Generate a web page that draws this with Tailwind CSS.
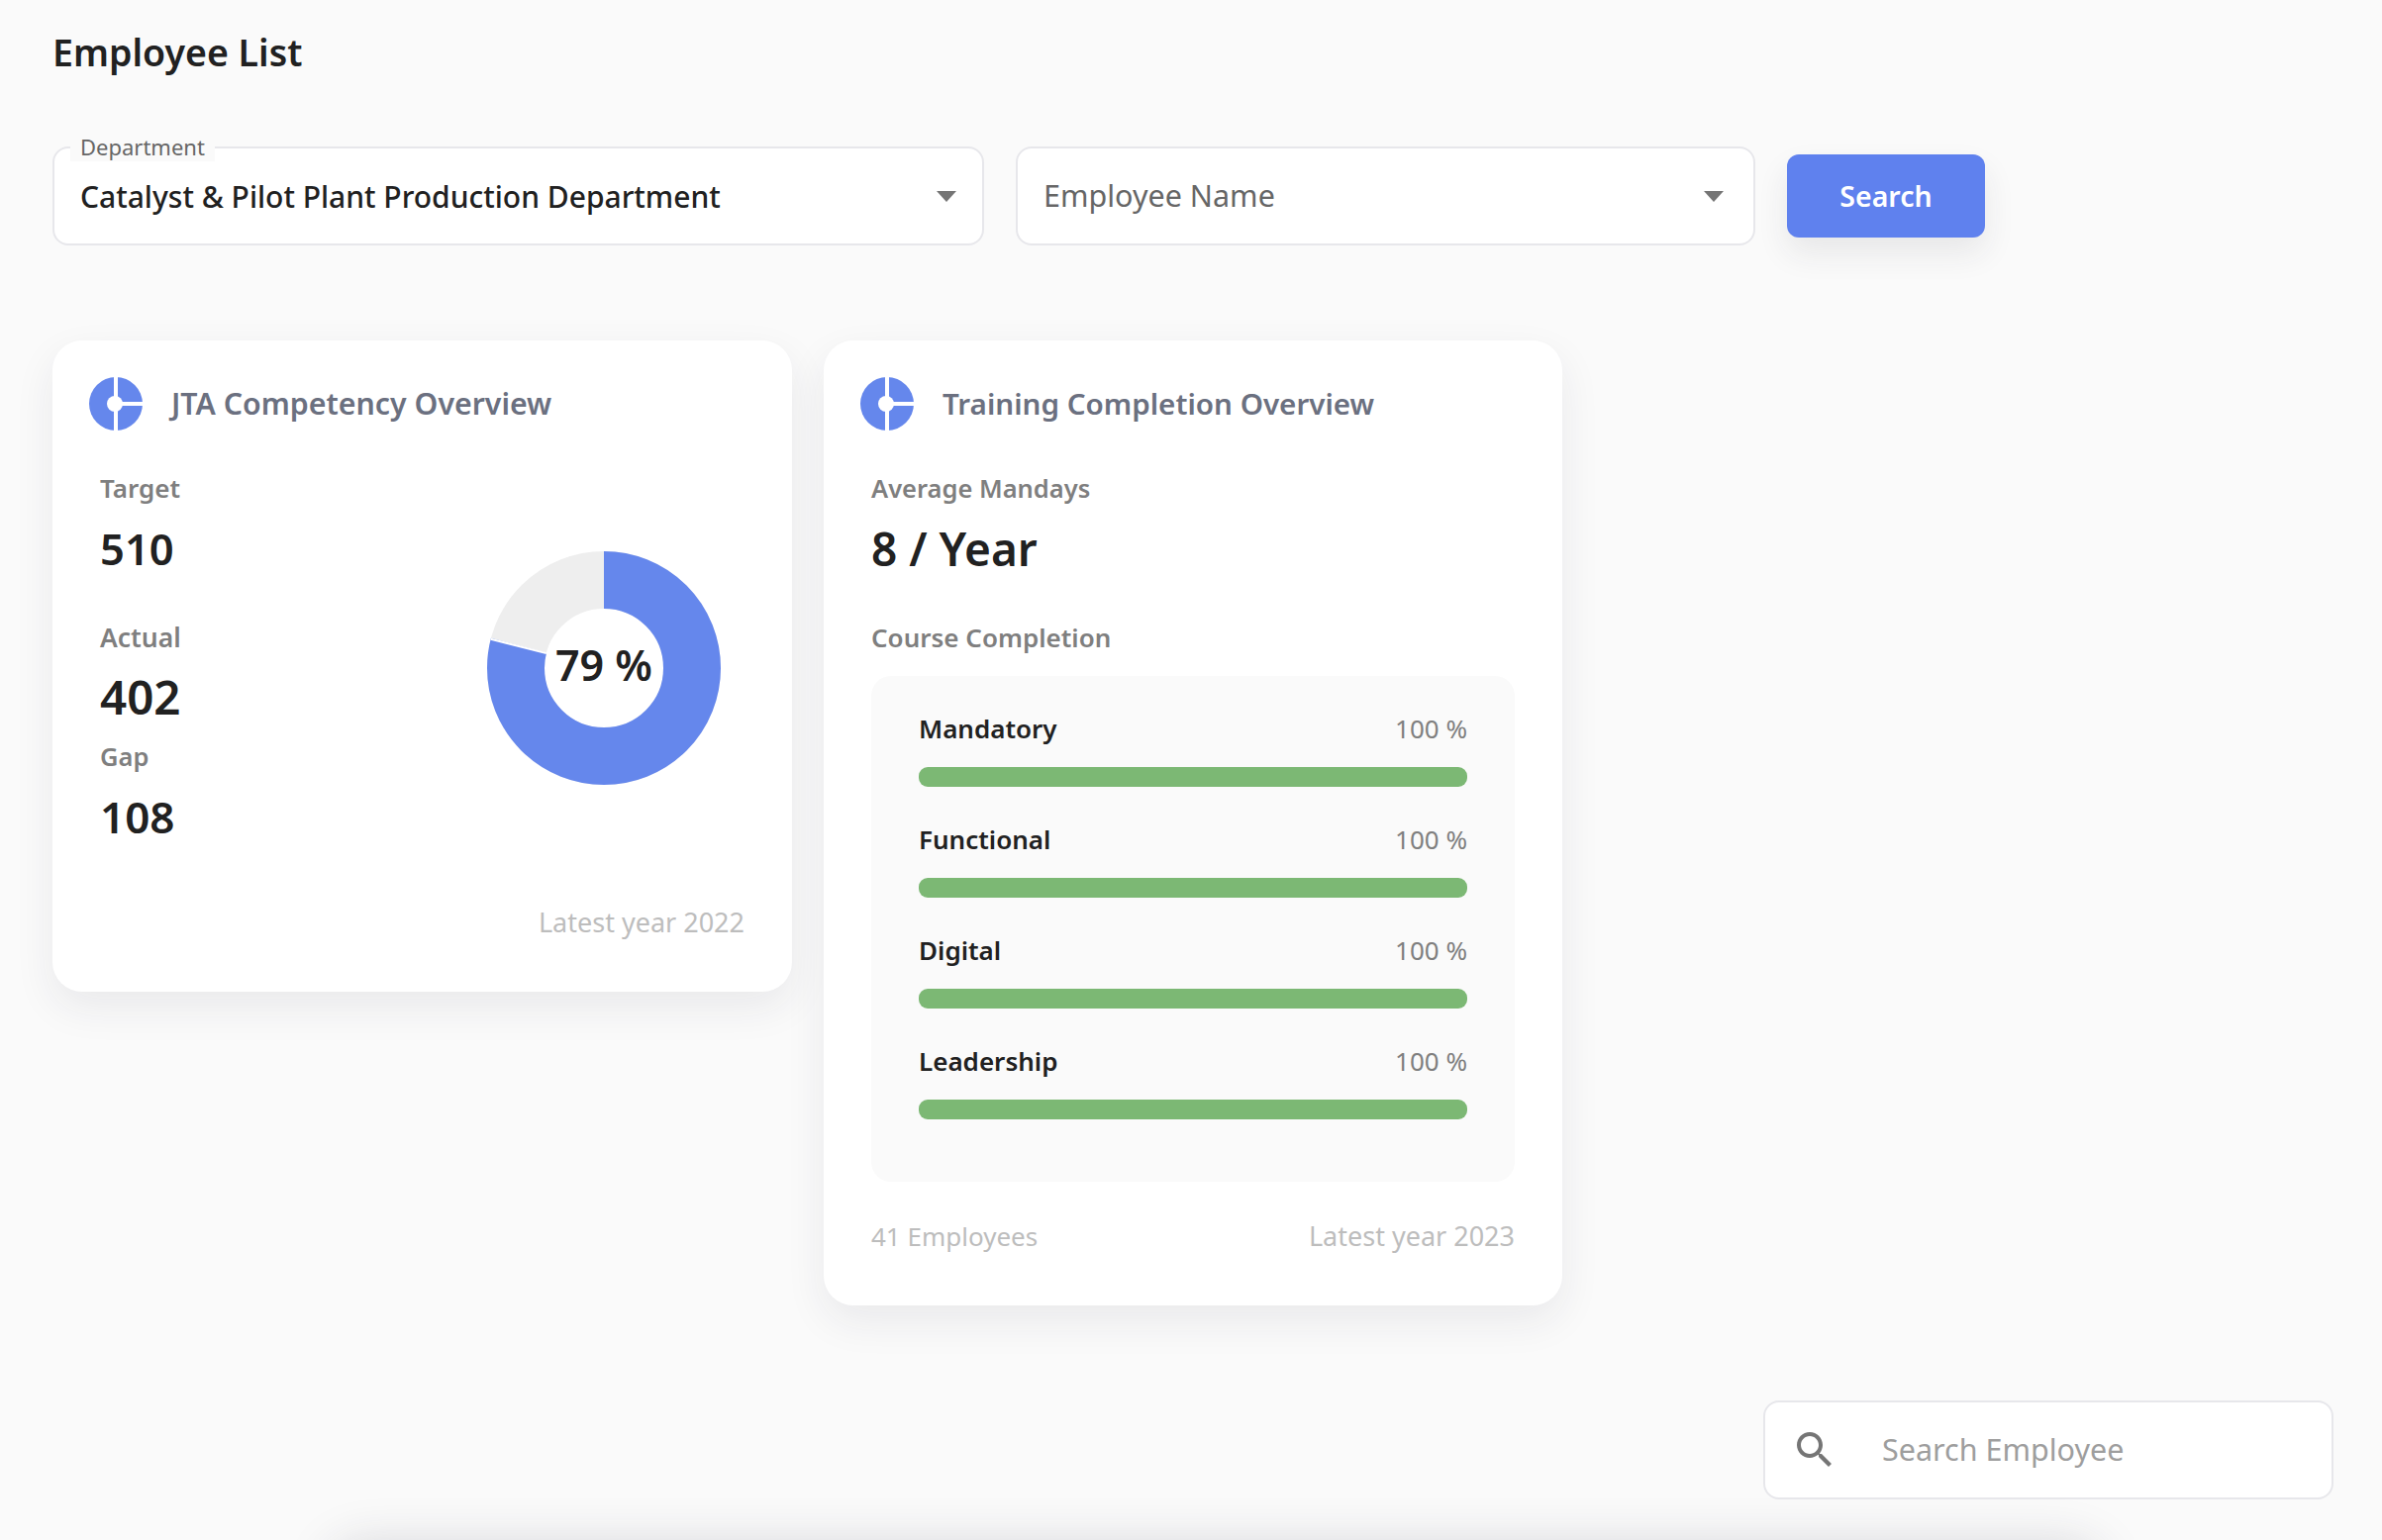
<!DOCTYPE html>
<html lang="en">
<head>
    <meta charset="UTF-8">
    <title>Employee List</title>
    <script src="https://cdn.jsdelivr.net/npm/@tailwindcss/browser@4"></script>
</head>
<body class="bg-[#fafafa] font-['Noto_Sans',sans-serif] text-[#212121]">
<div class="h-screen overflow-hidden">
    <div class="pl-[53px]">
        <h1 class="h-[106px] flex items-center text-[37.5px] font-semibold">Employee List</h1>

        <!-- Filtros -->
        <div class="mt-[42px] flex items-center h-[100px]">
            <div class="relative w-[941px] h-[100px] bg-white border-2 border-[#e7e7eb] rounded-[16px] flex items-center justify-between pl-[26px] pr-[26px]">
                <span class="absolute left-[16px] -top-[17px] px-[10px] bg-[#fafafa] text-[22px] leading-[30px] text-[#666666]">Department</span>
                <span class="text-[30px] font-medium">Catalyst &amp; Pilot Plant Production Department</span>
                <svg width="20" height="11" viewBox="0 0 20 11"><path d="M0 0h20L10 11z" fill="#757575"/></svg>
            </div>
            <div class="ml-[32px] w-[747px] h-[100px] bg-white border-2 border-[#e7e7eb] rounded-[16px] flex items-center justify-between pl-[26px] pr-[30px]">
                <span class="text-[30.5px] text-[#666666]">Employee Name</span>
                <svg width="20" height="11" viewBox="0 0 20 11"><path d="M0 0h20L10 11z" fill="#757575"/></svg>
            </div>
            <button class="ml-[32px] w-[200px] h-[84px] bg-[#5f81ee] rounded-[12px] text-white text-[28.5px] font-semibold shadow-[0_16px_32px_rgba(40,40,60,0.09)]">Search</button>
        </div>

        <!-- Cards -->
        <div class="mt-[96px] flex items-start gap-[32px]">
            <div class="w-[747px] h-[658px] bg-white rounded-[30px] shadow-[0_16px_40px_rgba(40,40,60,0.08)] flex flex-col">
                <div class="flex items-center gap-[29px] pl-[37px] pt-[37px]">
                    <svg width="54" height="54" viewBox="0 0 54 54"><circle cx="27" cy="27" r="27" fill="#6587ec"/><path d="M27 0v54M27 27h27" stroke="#fff" stroke-width="4"/><circle cx="26" cy="27" r="8" fill="#fff"/></svg>
                    <h2 class="text-[30.3px] font-semibold text-[#6b7080]">JTA Competency Overview</h2>
                </div>
                <div class="flex justify-between pl-[48px] pr-[72px] mt-[43px]">
                    <div>
                        <p class="text-[26px] leading-[30px] font-semibold text-[#7f7f7f]">Target</p>
                        <p class="mt-[16px] text-[43.5px] leading-[60px] font-semibold">510</p>
                        <p class="mt-[45px] text-[26.5px] leading-[30px] font-semibold text-[#7f7f7f]">Actual</p>
                        <p class="mt-[15px] text-[47.5px] leading-[60px] font-semibold">402</p>
                        <p class="mt-[15px] text-[25.5px] leading-[30px] font-semibold text-[#7f7f7f]">Gap</p>
                        <p class="mt-[16px] text-[44px] leading-[60px] font-semibold">108</p>
                    </div>
                    <div class="relative w-[236px] h-[236px] mt-[79px]">
                        <svg width="236" height="236" viewBox="0 0 236 236" class="-rotate-90">
                            <circle cx="118" cy="118" r="89" fill="none" stroke="#eeeeee" stroke-width="58"/>
                            <circle cx="118" cy="118" r="89" fill="none" stroke="#6587ec" stroke-width="58" stroke-dasharray="441.8 559.2"/>
                        </svg>
                        <svg width="236" height="236" viewBox="0 0 236 236" class="absolute inset-0"><path d="M59.9 103.1L3.7 88.7" stroke="#fff" stroke-width="2"/></svg>
                        <span class="absolute inset-0 flex items-center justify-center pb-[6px] text-[43px] font-semibold">79 %</span>
                    </div>
                </div>
                <p class="mt-auto pb-[55px] pr-[48px] text-right text-[27px] leading-[30px] text-[#bdbdbd]">Latest year 2022</p>
            </div>

            <div class="w-[746px] h-[975px] bg-white rounded-[30px] shadow-[0_16px_40px_rgba(40,40,60,0.08)] flex flex-col">
                <div class="flex items-center gap-[29px] pl-[37px] pt-[37px]">
                    <svg width="54" height="54" viewBox="0 0 54 54"><circle cx="27" cy="27" r="27" fill="#6587ec"/><path d="M27 0v54M27 27h27" stroke="#fff" stroke-width="4"/><circle cx="26" cy="27" r="8" fill="#fff"/></svg>
                    <h2 class="text-[29.6px] font-semibold text-[#6b7080]">Training Completion Overview</h2>
                </div>
                <div class="px-[48px] mt-[43px]">
                    <p class="text-[25.5px] leading-[30px] font-semibold text-[#7f7f7f]">Average Mandays</p>
                    <p class="mt-[16px] text-[46px] leading-[60px] font-semibold">8 / Year</p>
                    <p class="mt-[45px] text-[26px] leading-[30px] font-semibold text-[#7f7f7f]">Course Completion</p>
                    <div class="mt-[24px] h-[511px] bg-[#fafafa] rounded-[20px] px-[48px] pt-[38px] flex flex-col gap-[38px]">
                        <div>
                            <div class="flex justify-between text-[26px] leading-[30px]"><span class="font-semibold">Mandatory</span><span class="text-[#7f7f7f]">100 %</span></div>
                            <div class="mt-[24px] h-[20px] rounded-[9px] bg-[#7cb874]"></div>
                        </div>
                        <div>
                            <div class="flex justify-between text-[26px] leading-[30px]"><span class="font-semibold">Functional</span><span class="text-[#7f7f7f]">100 %</span></div>
                            <div class="mt-[24px] h-[20px] rounded-[9px] bg-[#7cb874]"></div>
                        </div>
                        <div>
                            <div class="flex justify-between text-[26px] leading-[30px]"><span class="font-semibold">Digital</span><span class="text-[#7f7f7f]">100 %</span></div>
                            <div class="mt-[24px] h-[20px] rounded-[9px] bg-[#7cb874]"></div>
                        </div>
                        <div>
                            <div class="flex justify-between text-[26px] leading-[30px]"><span class="font-semibold">Leadership</span><span class="text-[#7f7f7f]">100 %</span></div>
                            <div class="mt-[24px] h-[20px] rounded-[9px] bg-[#7cb874]"></div>
                        </div>
                    </div>
                </div>
                <div class="mt-auto pb-[55px] px-[48px] flex justify-between text-[27px] leading-[30px] text-[#bdbdbd]">
                    <span class="text-[26px]">41 Employees</span>
                    <span>Latest year 2023</span>
                </div>
            </div>
        </div>
    </div>

    <!-- Busca -->
    <div class="mt-[96px] flex justify-end pr-[49px]">
        <div class="w-[576px] h-[100px] bg-white border-2 border-[#e7e7eb] rounded-[16px] flex items-center pl-[26px]">
            <svg width="48" height="48" viewBox="0 0 24 24" fill="#757575"><path d="M15.5 14h-.79l-.28-.27C15.41 12.59 16 11.11 16 9.5 16 5.91 13.09 3 9.5 3S3 5.91 3 9.5 5.91 16 9.5 16c1.61 0 3.09-.59 4.23-1.57l.27.28v.79l5 4.99L20.49 19l-4.99-5zm-6 0C7.01 14 5 11.99 5 9.5S7.01 5 9.5 5 14 7.01 14 9.5 11.99 14 9.5 14z"/></svg>
            <span class="ml-[44px] text-[30.5px] text-[#9e9e9e]">Search Employee</span>
        </div>
    </div>

    <!-- Tabela abaixo da dobra -->
    <div class="mt-[47px] ml-[335px] mr-[285px] h-[200px] bg-white rounded-[30px] shadow-[0_0_50px_rgba(40,40,60,0.18)]"></div>
</div>
</body>
</html>
